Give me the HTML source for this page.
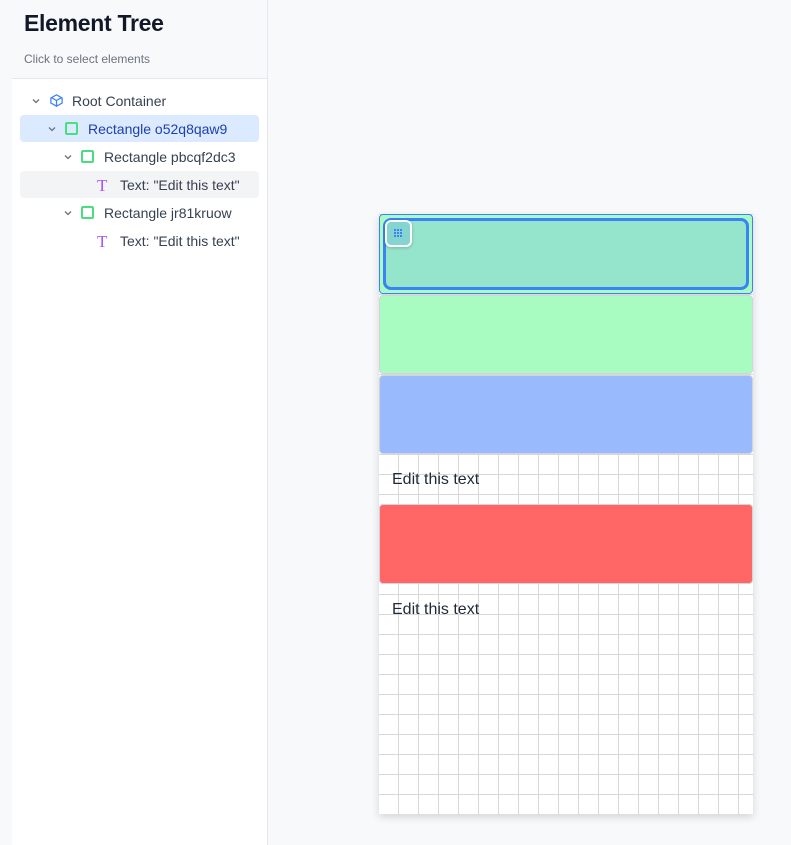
<!DOCTYPE html>
<html><head><style>
*{box-sizing:border-box;margin:0;padding:0}
body{width:791px;height:845px;background:#f8f9fb;font-family:"Liberation Sans",sans-serif;position:relative;overflow:hidden}
.side{position:absolute;left:12px;top:0;width:256px;height:845px;border-right:1px solid #e5e7eb}
.head{height:79px;border-bottom:1px solid #e5e7eb;padding:10px 12px}
.head h1{font-size:23px;font-weight:bold;color:#111827;letter-spacing:-0.3px}
.head p{font-size:12px;color:#6b7280;margin-top:15px}
.tree{background:#fff;position:absolute;top:79px;left:0;right:0;bottom:0}
.row{position:absolute;left:8px;width:239px;height:27px;font-size:14px;color:#374151;line-height:29px;border-radius:4px}
.row span{position:absolute;top:0}
.chev{position:absolute;top:11px}
.sq{position:absolute;top:7px;width:13px;height:13px;border:2px solid #4ade80;border-radius:2px}
.T{color:#a855f7;font-family:"Liberation Serif",serif;font-size:17px}
.canvas{position:absolute;left:379px;top:214px;width:374px;height:600px;background-color:#fff;
background-image:linear-gradient(to right,transparent 19px,#d8d8d8 19px),linear-gradient(to bottom,transparent 19px,#d8d8d8 19px);
background-size:20px 20px;background-position:0 1px;box-shadow:0 3px 8px rgba(0,0,0,.15)}
.r{position:absolute;left:0;width:374px;border-radius:4px;border:1px solid #d1d5db}
.txt{position:absolute;left:13px;font-size:16px;color:#1f2937}
</style></head><body>
<div class="side">
<div class="head"><h1>Element Tree</h1><p>Click to select elements</p></div>
<div class="tree">
<div class="row" style="top:8px"><svg class="chev" style="left:12px" width="8" height="6" viewBox="0 0 8 6" fill="none" stroke="#6b7280" stroke-width="1.3"><path d="M1 1.5l3 3 3-3"/></svg>
<svg style="position:absolute;left:29px;top:6px" width="15" height="15" viewBox="0 0 24 24" fill="none" stroke="#3b82f6" stroke-width="2"><path d="M21 16V8l-9-5-9 5v8l9 5 9-5z"/><path d="M3.3 7L12 12l8.7-5M12 22V12"/></svg>
<span style="left:52px">Root Container</span></div>
<div class="row" style="top:36px;background:#dbeafe;color:#1e40af"><svg class="chev" style="left:28px" width="8" height="6" viewBox="0 0 8 6" fill="none" stroke="#6b7280" stroke-width="1.3"><path d="M1 1.5l3 3 3-3"/></svg><div class="sq" style="left:45px"></div><span style="left:68px">Rectangle o52q8qaw9</span></div>
<div class="row" style="top:64px"><svg class="chev" style="left:44px" width="8" height="6" viewBox="0 0 8 6" fill="none" stroke="#6b7280" stroke-width="1.3"><path d="M1 1.5l3 3 3-3"/></svg><div class="sq" style="left:61px"></div><span style="left:84px">Rectangle pbcqf2dc3</span></div>
<div class="row" style="top:92px;background:#f3f4f6"><span class="T" style="left:77px">T</span><span style="left:100px">Text: "Edit this text"</span></div>
<div class="row" style="top:120px"><svg class="chev" style="left:44px" width="8" height="6" viewBox="0 0 8 6" fill="none" stroke="#6b7280" stroke-width="1.3"><path d="M1 1.5l3 3 3-3"/></svg><div class="sq" style="left:61px"></div><span style="left:84px">Rectangle jr81kruow</span></div>
<div class="row" style="top:148px"><span class="T" style="left:77px">T</span><span style="left:100px">Text: "Edit this text"</span></div>
</div></div>
<div class="canvas">
<div class="r" style="top:0;height:80px;background:#a8fcc2;border:1px solid #3b82f6">
<div style="position:absolute;left:3px;top:3px;right:3px;bottom:3px;border:3px solid #3b82f6;border-radius:8px;background:#95e4cc"></div>
<div style="position:absolute;left:5px;top:5px;width:27px;height:27px;border:2px solid #fff;border-radius:6px;background:#85d4d0;box-shadow:0 1px 3px rgba(0,0,0,.2)">
<svg style="position:absolute;left:7px;top:7px" width="9" height="9" viewBox="0 0 9 9" fill="#3b82f6"><rect x="0" y="0" width="2" height="2"/><rect x="3" y="0" width="2" height="2"/><rect x="6" y="0" width="2" height="2"/><rect x="0" y="3" width="2" height="2"/><rect x="3" y="3" width="2" height="2"/><rect x="6" y="3" width="2" height="2"/><rect x="0" y="6" width="2" height="2"/><rect x="3" y="6" width="2" height="2"/><rect x="6" y="6" width="2" height="2"/></svg></div>
</div>
<div class="r" style="top:81px;height:79px;background:#a8fcc2"></div>
<div class="r" style="top:161px;height:79px;background:#9abafe"></div>
<div class="txt" style="top:257px">Edit this text</div>
<div class="r" style="top:290px;height:80px;background:#ff6666"></div>
<div class="txt" style="top:387px">Edit this text</div>
</div>
</body></html>
